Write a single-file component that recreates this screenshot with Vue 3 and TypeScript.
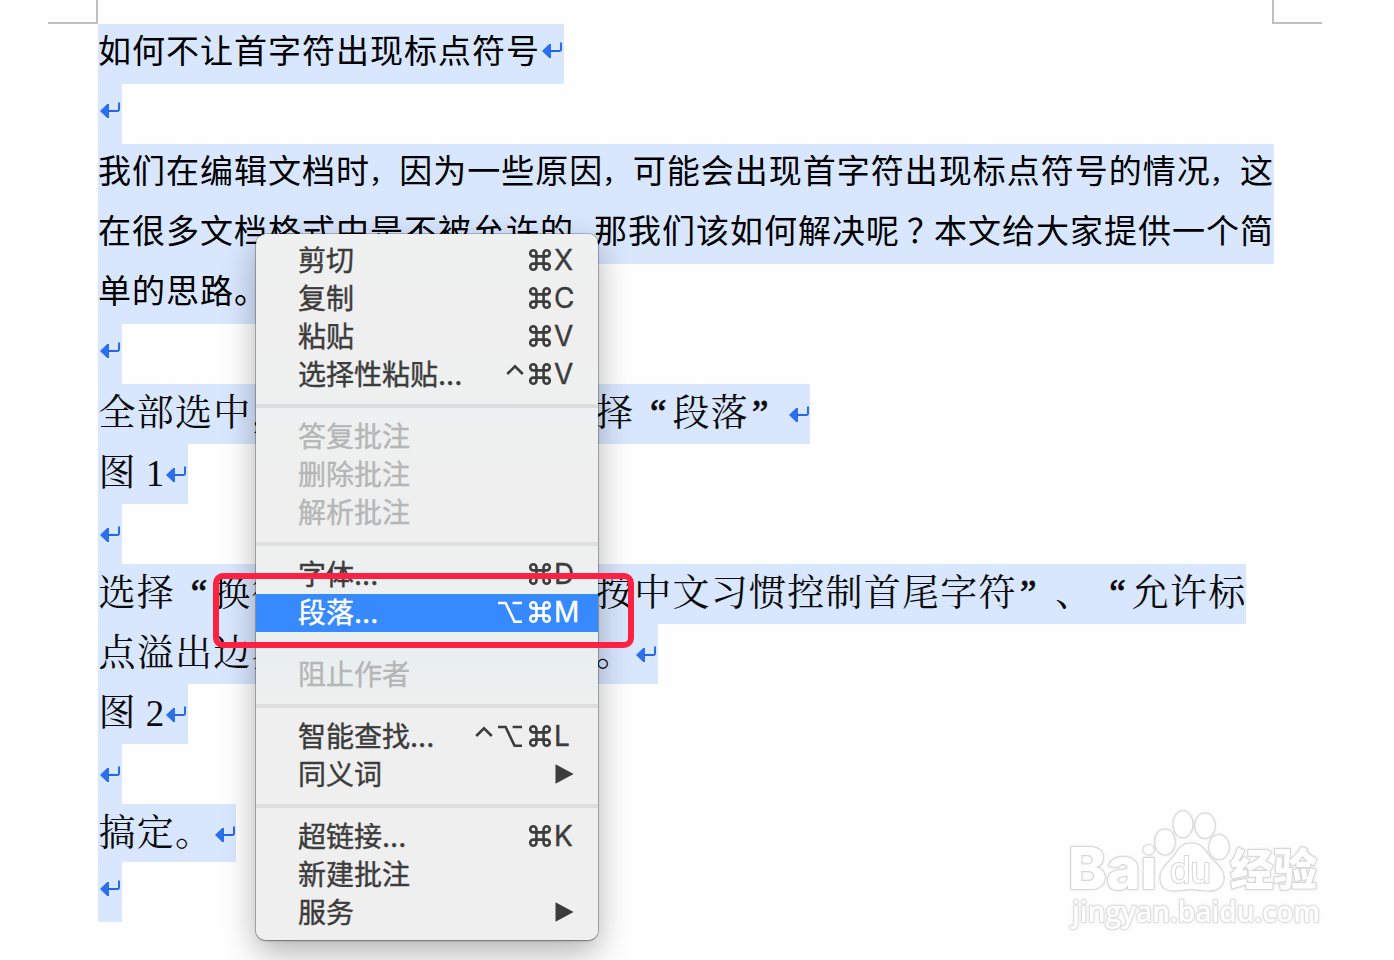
<script setup lang="ts">
type Face = 'hei' | 'song'

interface Line {
  text: string
  face: Face
  width: number
  tight?: 'a' | 'b'
  height?: number
}

interface Item {
  label: string
  mods?: string[]
  letter?: string
  disabled?: boolean
  active?: boolean
  submenu?: boolean
}

const lines: Line[] = [
  { text: '如何不让首字符出现标点符号', face: 'hei', width: 466 },
  { text: '', face: 'hei', width: 24 },
  { text: '我们在编辑文档时，因为一些原因，可能会出现首字符出现标点符号的情况，这', face: 'hei', width: 1176, tight: 'a' },
  { text: '在很多文档格式中是不被允许的，那我们该如何解决呢？本文给大家提供一个简', face: 'hei', width: 1176, tight: 'b' },
  { text: '单的思路。', face: 'hei', width: 194 },
  { text: '', face: 'hei', width: 24 },
  { text: '全部选中，单击鼠标右键，选择“段落”', face: 'song', width: 712 },
  { text: '图 1', face: 'song', width: 90 },
  { text: '', face: 'song', width: 24 },
  { text: '选择“换行和分页”，选择“按中文习惯控制首尾字符”、“允许标', face: 'song', width: 1148 },
  { text: '点溢出边界”这两个选项即可。', face: 'song', width: 560 },
  { text: '图 2', face: 'song', width: 90 },
  { text: '', face: 'song', width: 24 },
  { text: '搞定。', face: 'song', width: 138, height: 58 },
  { text: '', face: 'hei', width: 24 },
]

const endsParagraph = (i: number) => ![2, 3, 9].includes(i)

const split = (text: string) => text.split(/([“”，？]| \d)/).filter(Boolean)

const kinds: Record<string, string> = { '“': 'quote open', '”': 'quote', '，': 'comma', '？': 'question' }
const kind = (part: string) => kinds[part] ?? (part.startsWith(' ') ? 'digit' : 'run')

const groups: Item[][] = [
  [
    { label: '剪切', mods: ['cmd'], letter: 'X' },
    { label: '复制', mods: ['cmd'], letter: 'C' },
    { label: '粘贴', mods: ['cmd'], letter: 'V' },
    { label: '选择性粘贴...', mods: ['ctrl', 'cmd'], letter: 'V' },
  ],
  [
    { label: '答复批注', disabled: true },
    { label: '删除批注', disabled: true },
    { label: '解析批注', disabled: true },
  ],
  [
    { label: '字体...', mods: ['cmd'], letter: 'D' },
    { label: '段落...', mods: ['opt', 'cmd'], letter: 'M', active: true },
  ],
  [{ label: '阻止作者', disabled: true }],
  [
    { label: '智能查找...', mods: ['ctrl', 'opt', 'cmd'], letter: 'L' },
    { label: '同义词', submenu: true },
  ],
  [
    { label: '超链接...', mods: ['cmd'], letter: 'K' },
    { label: '新建批注' },
    { label: '服务', submenu: true },
  ],
]

const glyphs: Record<string, string> = {
  cmd: 'M9.4 9.4H16.6V16.6H9.4ZM9.4 9.4H6.3A3.1 3.1 0 1 1 9.4 6.3ZM16.6 9.4V6.3A3.1 3.1 0 1 1 19.7 9.4ZM16.6 16.6H19.7A3.1 3.1 0 1 1 16.6 19.7ZM9.4 16.6V19.7A3.1 3.1 0 1 1 6.3 16.6Z',
  opt: 'M1 4H8.6L17.6 22.8H25M15.6 4H25',
  ctrl: 'M5.2 13L13 5.4L20.8 13',
}
</script>

<template>
  <main class="page" lang="zh-CN">
    <header class="margins">
      <i class="corner left"></i>
      <i class="corner right"></i>
    </header>

    <article class="doc">
      <p
        v-for="(line, i) in lines"
        :key="i"
        class="line"
        :class="[line.face, line.tight && 'tight-' + line.tight]"
        :style="{ width: line.width + 'px', height: (line.height ?? 60) + 'px' }"
      >
        <span class="text"><span v-for="(part, n) in split(line.text)" :key="n" :class="kind(part)">{{ part }}</span></span>
        <svg v-if="endsParagraph(i)" class="mark" width="20" height="17" viewBox="0 0 20 17">
          <path d="M0 9L7.2 2H9V16H7.2Z" fill="#2b70ea" />
          <path d="M8 9H17.2Q19 9 19 7.2V0.4" fill="none" stroke="#2366e6" stroke-width="1.9" />
        </svg>
      </p>
    </article>

    <nav class="menu">
      <ul v-for="(group, g) in groups" :key="g" class="group">
        <li v-for="item in group" :key="item.label" class="item" :class="{ disabled: item.disabled, active: item.active }">
          <span class="label">{{ item.label }}</span>
          <svg v-for="m in item.mods" :key="m" class="mod" :class="m" viewBox="0 0 26 26">
            <path :d="glyphs[m]" />
          </svg>
          <span v-if="item.letter" class="letter">{{ item.letter }}</span>
          <svg v-if="item.submenu" class="arrow" width="19" height="20" viewBox="0 0 19 20"><path d="M0.5 0.3V19.7L18.6 10Z" /></svg>
        </li>
      </ul>
    </nav>

    <div class="callout"></div>

    <svg class="logo" width="270" height="134" viewBox="1060 804 270 134">
      <g class="outline">
        <text class="latin" x="1068" y="888.5" textLength="89" lengthAdjust="spacingAndGlyphs">Bai</text>
        <ellipse cx="1165" cy="842" rx="9.8" ry="12.4" />
        <ellipse cx="1183" cy="824.3" rx="9.4" ry="13" />
        <ellipse cx="1205" cy="825.7" rx="9.8" ry="12.2" />
        <ellipse cx="1219" cy="847" rx="9.8" ry="12" />
        <path d="M1191 843.5C1200 843.5 1204 849 1208 855C1213 862 1223 867 1223.5 877C1224 886 1217 890.5 1209 890.5C1201 890.5 1198 889 1191 889C1184 889 1181 890.5 1174 890.5C1165 890.5 1160 886 1160.500 877C1161 868 1170 862 1175 855C1179 849 1182 843.5 1191 843.5Z" />
        <text class="du" x="1170" y="882.5" textLength="41" lengthAdjust="spacingAndGlyphs">du</text>
        <text class="han" x="1230" y="885.5" textLength="87" lengthAdjust="spacingAndGlyphs">经验</text>
        <text class="site" x="1072" y="922" textLength="248" lengthAdjust="spacingAndGlyphs">jingyan.baidu.com</text>
      </g>
    </svg>
  </main>
</template>

<style>
body {
  margin: 0;
  background: #fff;
}
</style>

<style scoped>
.page {
  position: relative;
  width: 1394px;
  height: 960px;
  overflow: hidden;
  background: #fefefe;
  text-spacing-trim: space-all;
  text-autospace: no-autospace;
}
.margins {
  display: flex;
  justify-content: space-between;
  box-sizing: border-box;
  height: 24px;
  padding: 0 72px 0 48px;
}
.corner {
  width: 48px;
  height: 22px;
  border: 0 solid #c0c0c0;
  border-bottom-width: 2px;
}
.left {
  border-right-width: 2px;
}
.right {
  border-left-width: 2px;
}
.doc {
  padding-left: 98px;
}
.line {
  display: flex;
  align-items: flex-start;
  margin: 0;
  background: #d8e6fe;
  color: #000;
  white-space: pre;
}
.hei {
  font: 400 33px/60px "Noto Sans CJK SC", sans-serif;
}
.song {
  color: #0a0a0a;
  font: 400 37px/60px "Liberation Serif", "Noto Serif CJK SC", "Noto Sans CJK SC", serif;
}
.text {
  display: block;
  height: 60px;
}
.hei .text {
  margin: -5px 0 0;
  letter-spacing: 1px;
}
.song .text {
  margin: 0 0 0 0.4px;
  letter-spacing: 1.27px;
}
.comma,
.question {
  display: inline-block;
}
.hei .comma {
  font-size: 27px;
  line-height: 30px;
  text-indent: -1px;
}
.question {
  width: 34px;
  text-indent: 7px;
}
.tight-a .comma {
  width: 29.33px;
}
.tight-b .comma {
  width: 20px;
}
.digit {
  letter-spacing: -0.1px;
}
.song .quote {
  display: inline-block;
  width: 38.27px;
  padding-left: 3px;
  box-sizing: border-box;
  letter-spacing: 0;
  -webkit-text-stroke: 0.8px currentColor;
}
.song .quote.open {
  padding: 0 6px 0 0;
  text-align: right;
}
.mark {
  flex: none;
  margin: 18px 0 0 2px;
}
.song .mark {
  margin: 22px 0 0 1.6px;
}

.menu {
  position: absolute;
  left: 256px;
  top: 234px;
  box-sizing: border-box;
  width: 342px;
  height: 706px;
  padding: 8px 0;
  border-radius: 10px;
  background: linear-gradient(#eff1f1 0, #efefef 60px, #efefef 120px, #eef1f1 180px, #efefef 230px, #efefef 300px, #ebf0f0 370px, #e9efef 430px, #efefef 475px);
  box-shadow: 0 0 0 1px rgba(0, 0, 0, 0.2), 0 1px 2px rgba(0, 0, 0, 0.3), 0 12px 32px rgba(0, 0, 0, 0.3);
}
.group {
  margin: 0;
  padding: 0;
  list-style: none;
}
.group + .group::before {
  content: "";
  display: block;
  height: 4px;
  margin: 10px 0;
  background: #dedede;
}
.item {
  display: flex;
  align-items: center;
  box-sizing: border-box;
  height: 38px;
  padding-left: 42px;
  color: #3c3c3c;
  font: 400 28px/38px Inter, "Noto Sans CJK SC", sans-serif;
  -webkit-text-stroke: 0.4px currentColor;
}
.label {
  flex: 1;
  margin-top: -1px;
  white-space: nowrap;
}
.letter {
  width: 44px;
  margin-top: -3px;
}
.mod {
  width: 26px;
  height: 26px;
  margin: -3px 0 0 4px;
  fill: none;
  stroke: currentColor;
  stroke-width: 2.6;
}
.mod.cmd {
  margin: -3px 1px 0 4px;
}
.ctrl + .cmd {
  margin-left: -1px;
}
.ctrl + .opt {
  margin-left: 0;
}
.arrow {
  margin: -3px 24px 0 0;
  fill: currentColor;
}
.disabled {
  color: #b5b6b6;
}
.active {
  background: #368afd;
  color: #fff;
}
.callout {
  position: absolute;
  left: 213px;
  top: 573px;
  box-sizing: border-box;
  width: 421px;
  height: 75px;
  border: 6px solid #ff2142;
  border-radius: 10px;
}
.logo {
  position: absolute;
  left: 1060px;
  top: 804px;
}
.outline {
  fill: #fff;
  stroke: #d6d6d6;
  stroke-width: 2;
  stroke-linejoin: round;
  paint-order: stroke;
  filter: drop-shadow(0 0 1px rgba(0, 0, 0, 0.12));
}
.latin {
  font: 800 57.5px Inter, sans-serif;
}
.du {
  font: 400 36px "Liberation Sans", sans-serif;
}
.han {
  font: 900 44px "Noto Sans CJK SC", sans-serif;
}
.site {
  font: 600 29px "Open Sans", sans-serif;
  stroke: #dedede;
}
</style>
